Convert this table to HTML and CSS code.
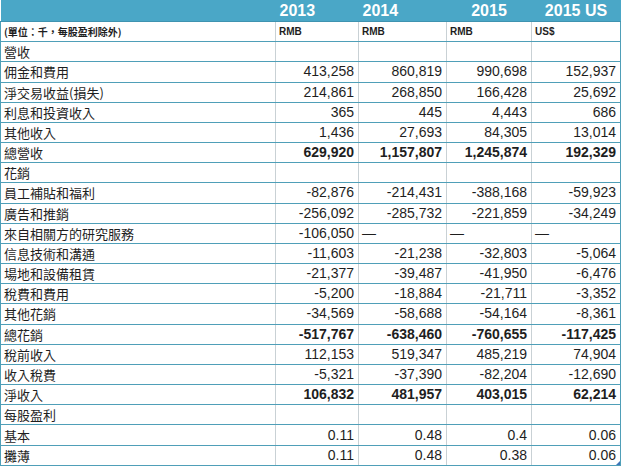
FILE: index.html
```html
<!DOCTYPE html>
<html>
<head>
<meta charset="utf-8">
<link rel="stylesheet" href="styles.css">
</head>
<body>
<table class="fin">
<colgroup>
<col class="c-label"><col class="c-2013"><col class="c-2014"><col class="c-2015"><col class="c-us">
</colgroup>
<thead>
<tr class="head">
<th></th><th class="y-left">2013</th><th class="y-left">2014</th><th class="y-center">2015</th><th class="y-center">2015 US</th>
</tr>
</thead>
<tbody>
<tr class="unit"><td class="small">(單位：千，每股盈利除外)</td><td>RMB</td><td>RMB</td><td>RMB</td><td>US$</td></tr>
<tr><td>營收</td><td></td><td></td><td></td><td></td></tr>
<tr><td>佣金和費用</td><td class="n">413,258</td><td class="n">860,819</td><td class="n">990,698</td><td class="n">152,937</td></tr>
<tr><td>淨交易收益(損失)</td><td class="n">214,861</td><td class="n">268,850</td><td class="n">166,428</td><td class="n">25,692</td></tr>
<tr><td>利息和投資收入</td><td class="n">365</td><td class="n">445</td><td class="n">4,443</td><td class="n">686</td></tr>
<tr><td>其他收入</td><td class="n">1,436</td><td class="n">27,693</td><td class="n">84,305</td><td class="n">13,014</td></tr>
<tr class="bold"><td>總營收</td><td class="n">629,920</td><td class="n">1,157,807</td><td class="n">1,245,874</td><td class="n">192,329</td></tr>
<tr><td>花銷</td><td></td><td></td><td></td><td></td></tr>
<tr><td>員工補貼和福利</td><td class="n">-82,876</td><td class="n">-214,431</td><td class="n">-388,168</td><td class="n">-59,923</td></tr>
<tr><td>廣告和推銷</td><td class="n">-256,092</td><td class="n">-285,732</td><td class="n">-221,859</td><td class="n">-34,249</td></tr>
<tr><td>來自相關方的研究服務</td><td class="n">-106,050</td><td class="dash">—</td><td class="dash">—</td><td class="dash">—</td></tr>
<tr><td>信息技術和溝通</td><td class="n">-11,603</td><td class="n">-21,238</td><td class="n">-32,803</td><td class="n">-5,064</td></tr>
<tr><td>場地和設備租賃</td><td class="n">-21,377</td><td class="n">-39,487</td><td class="n">-41,950</td><td class="n">-6,476</td></tr>
<tr><td>稅費和費用</td><td class="n">-5,200</td><td class="n">-18,884</td><td class="n">-21,711</td><td class="n">-3,352</td></tr>
<tr><td>其他花銷</td><td class="n">-34,569</td><td class="n">-58,688</td><td class="n">-54,164</td><td class="n">-8,361</td></tr>
<tr class="bold"><td>總花銷</td><td class="n">-517,767</td><td class="n">-638,460</td><td class="n">-760,655</td><td class="n">-117,425</td></tr>
<tr><td>稅前收入</td><td class="n">112,153</td><td class="n">519,347</td><td class="n">485,219</td><td class="n">74,904</td></tr>
<tr><td>收入稅費</td><td class="n">-5,321</td><td class="n">-37,390</td><td class="n">-82,204</td><td class="n">-12,690</td></tr>
<tr class="bold"><td>淨收入</td><td class="n">106,832</td><td class="n">481,957</td><td class="n">403,015</td><td class="n">62,214</td></tr>
<tr><td>每股盈利</td><td></td><td></td><td></td><td></td></tr>
<tr><td>基本</td><td class="n">0.11</td><td class="n">0.48</td><td class="n">0.4</td><td class="n">0.06</td></tr>
<tr class="last"><td>攤薄</td><td class="n">0.11</td><td class="n">0.48</td><td class="n">0.38</td><td class="n corner">0.06<span class="handle"></span></td></tr>
</tbody>
</table>
</body>
</html>
```

FILE: styles.css
```css
html, body {
  margin: 0;
  padding: 0;
  background: #ffffff;
}

.fin {
  border-collapse: collapse;
  table-layout: fixed;
  width: 620px;
  height: 466px;
  font-family: "Liberation Sans", Arial, "Noto Sans CJK TC", sans-serif;
  color: #1e1e1e;
}

.c-label { width: 275px; }
.c-2013 { width: 83px; }
.c-2014 { width: 88px; }
.c-2015 { width: 85px; }
.c-us { width: 89px; }

.head th {
  background: #4aa7c7;
  color: #ffffff;
  font-size: 16px;
  font-weight: bold;
  height: 21px;
  padding: 0 4px;
  border: none;
  border-bottom: 1px solid #3f93b0;
  line-height: 21px;
}

.y-left { text-align: left; }
.y-center { text-align: center; }

tbody td {
  height: 19px;
  padding: 0 4px 0 3px;
  font-size: 13px;
  line-height: 19px;
  white-space: nowrap;
  overflow: hidden;
  border-top: 1px solid #4f9fb8;
  border-bottom: 1px solid #4f9fb8;
  border-left: 1px solid #c9d1d5;
  border-right: 1px solid #c9d1d5;
}

tbody td:first-child {
  border-left: 1px solid #4f9fb8;
  font-family: "Noto Sans CJK TC", "Liberation Sans", sans-serif;
  font-size: 13px;
}

tbody td:last-child {
  border-right: 1px solid #4f9fb8;
}

.unit td {
  font-size: 10px;
  font-weight: bold;
}

.unit td.small {
  font-size: 10px;
  font-weight: bold;
}

.n {
  text-align: right;
  font-size: 14px;
}

.bold .n {
  font-weight: bold;
}

.dash {
  text-align: left;
  font-size: 14px;
}

.corner {
  position: relative;
}

.handle {
  position: absolute;
  right: 0;
  bottom: 0;
  width: 0;
  height: 0;
  border-left: 4px solid transparent;
  border-bottom: 4px solid #3d74b8;
}
```
